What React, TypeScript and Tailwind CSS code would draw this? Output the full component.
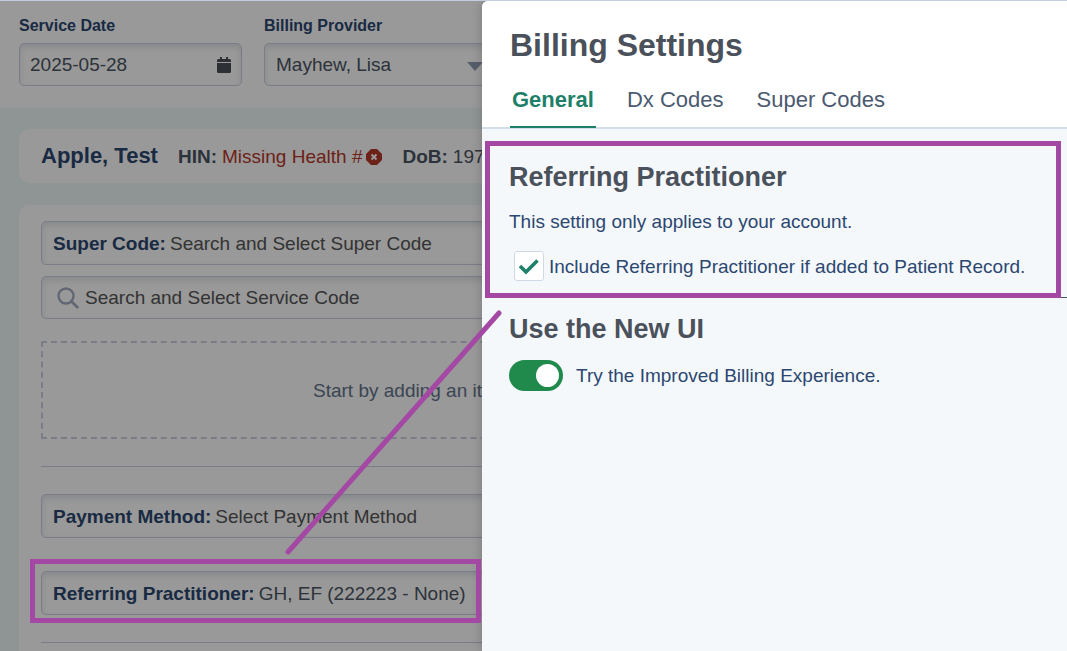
import { useState } from "react";
import type { ReactNode } from "react";

const fieldBox =
  "flex w-full items-center rounded-[5px] border border-[#ccd1e3] bg-white shadow-[inset_0_3px_6px_rgba(60,80,110,0.16)]";

const tabs = ["General", "Dx Codes", "Super Codes"];

function CalendarIcon() {
  return (
    <svg viewBox="0 0 14 16" className="h-4 w-3.5 shrink-0" fill="#4a4f58">
      <path d="M3 0h2v2h4V0h2v2h1.500q1.500 0 1.500 1.500V5H0V3.500Q0 2 1.500 2H3z" />
      <path d="M0 6h14v8.500q0 1.500-1.500 1.500h-11Q0 16 0 14.500z" />
    </svg>
  );
}

function MissingIcon() {
  return (
    <svg viewBox="0 0 16 16" className="h-4 w-4 shrink-0">
      <path d="M5 0h6l5 5v6l-5 5H5l-5-5V5z" fill="#b5382b" />
      <path d="M5.500 5.500l5 5M10.500 5.500l-5 5" stroke="#fff" strokeWidth="2" />
    </svg>
  );
}

function SearchIcon() {
  return (
    <svg
      viewBox="0 0 22 22"
      className="h-[22px] w-[22px] shrink-0"
      fill="none"
      stroke="#a2aec2"
      strokeLinecap="round"
    >
      <circle cx="9" cy="9" r="7.500" strokeWidth="2.400" />
      <path d="M14.500 14.500l5.800 5.800" strokeWidth="2.800" />
    </svg>
  );
}

interface LabeledFieldProps {
  id: string;
  label: string;
  children: ReactNode;
}

function LabeledField({ id, label, children }: LabeledFieldProps) {
  return (
    <div className={`${fieldBox} h-11 gap-1 px-[11px]`}>
      <label htmlFor={id} className="shrink-0 pt-0.5 font-bold text-[#2c4770]">
        {label}
      </label>
      {children}
    </div>
  );
}

function BillingPage() {
  return (
    <main className="bg-[#eff7f8]">
      <header className="flex h-[107px] items-start gap-[22px] bg-white px-[19px] pt-[15px]">
        <div className="w-[223px] shrink-0">
          <label htmlFor="service-date" className="block h-[27px] text-base leading-5 font-bold text-[#2c4770]">
            Service Date
          </label>
          <div className={`${fieldBox} h-[43px] px-2.5`}>
            <input id="service-date" defaultValue="2025-05-28" className="min-w-0 flex-1 pt-0.5 text-[#4b5563] outline-none" />
            <CalendarIcon />
          </div>
        </div>
        <div className="w-[242px] shrink-0">
          <label htmlFor="provider" className="block h-[27px] text-base leading-5 font-bold text-[#2c4770]">
            Billing Provider
          </label>
          <div className={`${fieldBox} relative h-[43px] px-[11px]`}>
            <select id="provider" className="w-full appearance-none pt-0.5 text-[#4b5563] outline-none">
              <option>Mayhew, Lisa</option>
            </select>
            <svg viewBox="0 0 16 9" className="pointer-events-none absolute top-[18px] right-[22px] h-[9px] w-4" fill="#929db3">
              <path d="M0 0h16L8 9z" />
            </svg>
          </div>
        </div>
      </header>

      <div className="flex flex-col gap-[22px] px-[19px] pt-[21px]">
        <section className="flex h-[54px] items-baseline rounded-[10px] bg-white pt-[11px] pl-[22px] whitespace-nowrap">
          <h2 className="text-[22px] leading-8 font-bold text-[#2c4770]">Apple, Test</h2>
          <span className="ml-5 leading-8 font-bold text-[#4b5563]">HIN:</span>
          <span className="ml-[5px] flex items-center gap-1 leading-8 text-[#b5382b]">
            Missing Health # <MissingIcon />
          </span>
          <span className="ml-5 leading-8 font-bold text-[#4b5563]">DoB:</span>
          <span className="ml-[5px] leading-8 text-[#4b5563]">1975</span>
        </section>

        <section className="rounded-[10px] bg-white px-[22px] pt-4 pb-10">
          <LabeledField id="super-code" label="Super Code:">
            <input
              id="super-code"
              placeholder="Search and Select Super Code"
              className="min-w-0 flex-1 pt-0.5 outline-none placeholder:text-[#555]"
            />
          </LabeledField>
          <div className={`${fieldBox} mt-[11px] h-[43px] gap-1.5 px-[15px]`}>
            <SearchIcon />
            <input
              aria-label="Service Code"
              placeholder="Search and Select Service Code"
              className="min-w-0 flex-1 pt-0.5 outline-none placeholder:text-[#555]"
            />
          </div>
          <div className="mt-[22px] flex h-[98px] items-center border-2 border-dashed border-[#ccd1e3] pt-0.5 pl-[270px] text-[#64748b]">
            Start by adding an item
          </div>
          <hr className="mt-[27px] border-[#ccd1e3]" />
          <div className="mt-[27px]">
            <LabeledField id="payment-method" label="Payment Method:">
              <select id="payment-method" className="min-w-0 flex-1 appearance-none pt-0.5 text-[#555] outline-none">
                <option>Select Payment Method</option>
              </select>
            </LabeledField>
          </div>
          <div className="relative mt-[33px]">
            <LabeledField id="practitioner" label="Referring Practitioner:">
              <input
                id="practitioner"
                defaultValue="GH, EF (222223 - None)"
                className="min-w-0 flex-1 pt-0.5 text-[#4b5563] outline-none"
              />
            </LabeledField>
            <div className="pointer-events-none absolute -top-3 -left-[11px] z-20 h-16 w-[451px] border-[5px] border-[#a349a4]" />
          </div>
          <hr className="mt-[27px] border-[#ccd1e3]" />
        </section>
      </div>
    </main>
  );
}

function SettingsDrawer() {
  const [activeTab, setActiveTab] = useState("General");

  return (
    <aside className="absolute top-0 right-0 bottom-0 z-10 w-[585px] max-w-full overflow-hidden rounded-tl-md bg-[#f4f8fb] shadow-[0_0_12px_rgba(0,0,0,0.2)]">
      <header className="border-b-2 border-[#d3dee8] bg-white pt-6 pl-7">
        <h1 className="text-[32px] leading-10 font-bold text-[#4a515b]">Billing Settings</h1>
        <nav role="tablist" className="mt-[7px] -mb-px flex gap-[29px]">
          {tabs.map((tab) => (
            <button
              key={tab}
              role="tab"
              aria-selected={tab === activeTab}
              onClick={() => setActiveTab(tab)}
              className={
                tab === activeTab
                  ? "h-[56px] border-b-2 border-[#1f8069] px-0.5 text-[22px] font-bold text-[#1f8069]"
                  : "h-[56px] border-b-2 border-transparent px-0.5 text-[22px] text-[#4b5a70]"
              }
            >
              {tab}
            </button>
          ))}
        </nav>
      </header>

      <section className="relative mt-3 pr-1.5 pl-[3px]">
        <div className="border-[5px] border-[#a349a4] pt-[13px] pb-3 pl-[19px]">
          <h2 className="text-[27px] leading-9 font-bold text-[#4a515b]">Referring Practitioner</h2>
          <p className="mt-[13px] leading-7">This setting only applies to your account.</p>
          <label className="mt-[15px] flex items-center gap-[5px] pl-[5px] leading-7">
            <span className="grid h-[30px] w-[30px] shrink-0">
              <input
                type="checkbox"
                defaultChecked
                className="peer col-start-1 row-start-1 appearance-none rounded-[3px] border border-[#d0dae6] bg-white"
              />
              <svg
                viewBox="0 0 30 30"
                className="pointer-events-none invisible col-start-1 row-start-1 peer-checked:visible"
                fill="none"
                stroke="#1f8069"
                strokeWidth="3.600"
              >
                <path d="M6 15l6 6L23.500 9.500" />
              </svg>
            </span>
            <span className="pt-0.5">Include Referring Practitioner if added to Patient Record.</span>
          </label>
        </div>
        <span className="absolute right-0 bottom-0 h-px w-1.5 bg-[#4b5563]" />
      </section>

      <section className="mt-[13px] pl-[27px]">
        <h2 className="text-[27px] leading-9 font-bold text-[#4a515b]">Use the New UI</h2>
        <label className="mt-[13px] flex items-center gap-[13px]">
          <input
            type="checkbox"
            role="switch"
            defaultChecked
            className="flex h-[31px] w-[54px] shrink-0 appearance-none items-center rounded-full bg-[#94a3b8] px-1 before:block before:h-[23px] before:w-[23px] before:rounded-full before:bg-white checked:justify-end checked:bg-[#1f8a4c]"
          />
          <span className="pt-0.5">Try the Improved Billing Experience.</span>
        </label>
      </section>
    </aside>
  );
}

export default function App() {
  return (
    <div className="relative h-screen overflow-hidden border-t border-[#c3cde0] font-['Liberation_Sans',Arial,sans-serif] text-[19px] text-[#2c4770]">
      <BillingPage />
      <div className="absolute inset-0 z-10 bg-black/40" />
      <SettingsDrawer />
      <svg
        viewBox="0 0 218 246"
        className="pointer-events-none absolute top-[309px] right-[564px] z-20 h-[246px] w-[218px]"
      >
        <path d="M3 242L214 3" stroke="#a349a4" strokeWidth="5" strokeLinecap="round" />
      </svg>
    </div>
  );
}
